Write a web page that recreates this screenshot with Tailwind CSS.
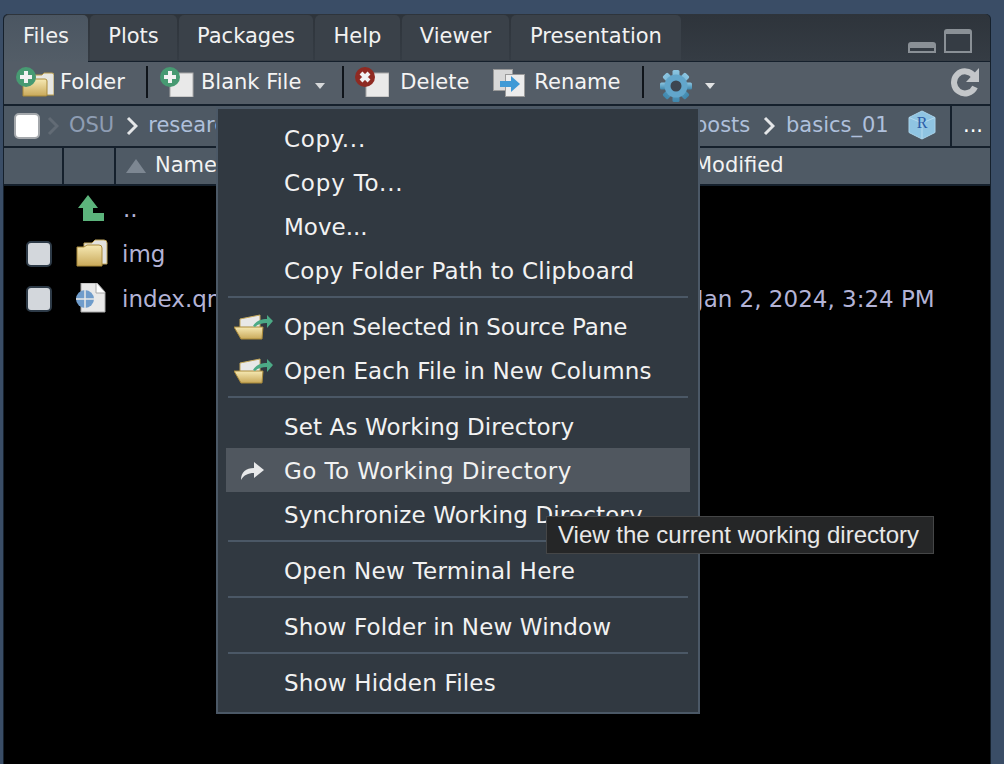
<!DOCTYPE html>
<html lang="en">
<head>
<meta charset="UTF-8">
<script src="https://cdn.jsdelivr.net/npm/@tailwindcss/browser@4"></script>
<title>Files pane</title>
</head>
<body class="w-[1004px] h-[764px] overflow-hidden bg-[#3a4d66] font-['DejaVu_Sans',sans-serif] text-[23px] text-[#f2f2f2] relative">

<svg class="absolute w-0 h-0">
  <defs>
    <linearGradient id="folderFill" x1="0" y1="0" x2="0" y2="1"><stop offset="0" stop-color="#f6e9b4"/><stop offset="1" stop-color="#c9a95a"/></linearGradient>
    <linearGradient id="gearFill" x1="0" y1="0" x2="0" y2="1"><stop offset="0" stop-color="#8cc6e2"/><stop offset="1" stop-color="#3f87ad"/></linearGradient>
  </defs>
</svg>

<div class="ml-[3px] mt-[14px] w-[988px] h-[750px] bg-[#15202c] rounded-t-[5px] flex flex-col pl-px pr-px">
  <!-- tabs -->
  <div class="h-[47px] pt-px flex gap-[2px] bg-gradient-to-b from-[#2e343b] to-[#353c44] rounded-t-[5px] relative text-[21px]">
    <div class="w-[84px] h-[47px] rounded-t-[5px] bg-gradient-to-b from-[#4b5662] to-[#535d67] flex items-center justify-center pb-[3px] z-10">Files</div>
    <div class="w-[87px] h-[45px] rounded-t-[5px] bg-[#3a4149] flex items-center justify-center pb-px">Plots</div>
    <div class="w-[134px] h-[45px] rounded-t-[5px] bg-[#3a4149] flex items-center justify-center pb-px">Packages</div>
    <div class="w-[85px] h-[45px] rounded-t-[5px] bg-[#3a4149] flex items-center justify-center pb-px">Help</div>
    <div class="w-[107px] h-[45px] rounded-t-[5px] bg-[#3a4149] flex items-center justify-center pb-px">Viewer</div>
    <div class="w-[170px] h-[45px] rounded-t-[5px] bg-[#3a4149] flex items-center justify-center pb-px">Presentation</div>
    <div class="ml-auto flex items-end gap-2 pr-[18px] pb-[8px] h-[46px]">
      <svg width="28" height="12" viewBox="0 0 28 12"><path d="M0 12V4a3 3 0 0 1 3-3h22a3 3 0 0 1 3 3v8z" fill="#8a9096"/><rect x="2" y="7" width="24" height="3" fill="#353c44"/></svg>
      <svg width="28" height="24" viewBox="0 0 28 24"><path d="M0 24V3a3 3 0 0 1 3-3h22a3 3 0 0 1 3 3v21z" fill="#8a9096"/><rect x="2" y="5" width="24" height="17" fill="#353c44"/></svg>
    </div>
  </div>

  <!-- toolbar -->
  <div class="h-[42px] mt-px bg-[#545d67] flex items-center text-[21px] text-[#f4f4f4] relative">
    <svg width="38" height="30" viewBox="0 0 38 30" class="ml-[12px] mt-[-2px]"><path d="M19 8h7l2-2h8a2 2 0 0 1 2 2v20H20z" fill="#e7e7e2" stroke="#b89b4b"/><path d="M7 12h22a2 2 0 0 1 2 2v14a1 1 0 0 1-1 1H7z" fill="url(#folderFill)" stroke="#a98a3a"/><circle cx="10" cy="10" r="10" fill="#479a72"/><path d="M10 4v12M4 10h12" stroke="#f2f2f2" stroke-width="4"/></svg>
    <span class="ml-[6px]">Folder</span>
    <div class="ml-[21px] mb-[2px] w-[2px] h-[32px] bg-[#0f141a]"></div>
    <svg width="34" height="30" viewBox="0 0 34 30" class="ml-[12px] mt-[-2px]"><rect x="10" y="6" width="23" height="24" fill="#e9e9e9" stroke="#a8a8a8"/><circle cx="10" cy="10" r="10" fill="#479a72"/><path d="M10 4v12M4 10h12" stroke="#f2f2f2" stroke-width="4"/></svg>
    <span class="ml-[7px]">Blank File</span>
    <svg width="10" height="6" viewBox="0 0 10 6" class="ml-[14px] mt-[5px]"><path d="M0 0h10L5 6z" fill="#d6d8da"/></svg>
    <div class="ml-[17px] mb-[2px] w-[2px] h-[32px] bg-[#0f141a]"></div>
    <svg width="34" height="30" viewBox="0 0 34 30" class="ml-[11px] mt-[-2px]"><rect x="11" y="6" width="23" height="24" fill="#e9e9e9" stroke="#a8a8a8"/><circle cx="10" cy="10" r="10" fill="#8f2a22"/><path d="M6 6l8 8M14 6l-8 8" stroke="#f2f2f2" stroke-width="4"/></svg>
    <span class="ml-[11px]">Delete</span>
    <svg width="32" height="28" viewBox="0 0 32 28" class="ml-[24px]"><rect x="0.500" y="0.500" width="19" height="21" fill="#d8d8d8" stroke="#9a9a9a"/><rect x="12.500" y="5.500" width="19" height="22" fill="#ececec" stroke="#9a9a9a"/><path d="M7 12h11V7l9 8-9 8v-5H7z" fill="#3f9ad6"/></svg>
    <span class="ml-[9px]">Rename</span>
    <div class="ml-[22px] mb-[2px] w-[2px] h-[32px] bg-[#0f141a]"></div>
    <svg width="32" height="32" viewBox="0 0 32 32" class="ml-[16px] mt-[6px]">
      <g fill="url(#gearFill)"><rect x="12.500" y="0" width="7" height="32" rx="1.500"/><rect x="0" y="12.500" width="32" height="7" ry="1.500"/><rect x="12.500" y="0" width="7" height="32" rx="1.500" transform="rotate(45 16 16)"/><rect x="12.500" y="0" width="7" height="32" rx="1.500" transform="rotate(-45 16 16)"/></g>
      <circle cx="16" cy="16" r="11.500" fill="#62a6cb"/><circle cx="16" cy="16" r="5.500" fill="#3d4650"/>
    </svg>
    <svg width="10" height="6" viewBox="0 0 10 6" class="ml-[13px] mt-[6px]"><path d="M0 0h10L5 6z" fill="#e2e3e4"/></svg>
    <svg width="30" height="30" viewBox="0 0 30 30" class="ml-auto mr-[9px] mt-[-2px]"><path d="M24 20a11 11 0 1 1-1-11" fill="none" stroke="#c3c6c9" stroke-width="6"/><path d="M28 1v14H15z" fill="#c3c6c9"/></svg>
  </div>

  <!-- path bar -->
  <div class="h-[40px] mt-[2px] bg-[#4e5964] flex items-center text-[21px] relative">
    <div class="ml-[10px] w-[26px] h-[26px] bg-white rounded-[5px] border-2 border-[#a4a8ac]"></div>
    <svg width="12" height="20" viewBox="0 0 12 20" class="ml-[7px]"><path d="M2 2l8 8-8 8" fill="none" stroke="#626b75" stroke-width="3"/></svg>
    <span class="ml-[10px] text-[#8e9db3]">OSU</span>
    <svg width="12" height="20" viewBox="0 0 12 20" class="ml-[12px]"><path d="M2 2l8 8-8 8" fill="none" stroke="#e4e6e8" stroke-width="3"/></svg>
    <span class="ml-[10px] text-[#afc0dc]">research</span>
    <span class="absolute left-[690px] text-[#afc0dc]">posts</span>
    <svg width="12" height="20" viewBox="0 0 12 20" class="absolute left-[759px] top-[10px]"><path d="M2 2l8 8-8 8" fill="none" stroke="#e4e6e8" stroke-width="3"/></svg>
    <span class="absolute left-[782px] text-[#afc0dc]">basics_01</span>
    <svg width="30" height="30" viewBox="0 0 30 30" class="absolute left-[903px] top-[4px]"><path d="M15 1l13 6.500v15L15 29 2 22.500v-15z" fill="#8fc4e2" stroke="#a9d3ea"/><path d="M2 7.500L15 13l13-5.500M15 13v16" fill="none" stroke="#b4daee"/><text x="15" y="18" text-anchor="middle" font-family="Liberation Serif" font-size="16" fill="#2a5ca8">R</text></svg>
    <div class="absolute left-[946px] top-0 w-[2px] h-[40px] bg-[#15202c]"></div>
    <span class="absolute left-[959px] text-white">...</span>
  </div>

  <!-- table header -->
  <div class="h-[36px] mt-[2px] bg-[#4f5a65] flex items-center text-[21px]">
    <div class="w-[60px] h-full border-r-2 border-[#15202c]"></div>
    <div class="w-[52px] h-full border-r-2 border-[#15202c]"></div>
    <svg width="20" height="14" viewBox="0 0 20 14" class="ml-[10px] mr-[9px]"><path d="M0 14L10 0l10 14z" fill="#7d8792"/></svg>
    <span>Name</span>
    <span class="ml-[477px]">Modified</span>
  </div>

  <!-- file list -->
  <div class="flex-1 mt-[2px] bg-black pr-[3px] text-[#b3b3d6]">
    <div class="h-[46px] flex items-center">
      <svg width="26" height="26" viewBox="0 0 26 26" class="ml-[74px] mb-[2px]"><path d="M10 0l10 13h-5v5h11v8H5V13H0z" fill="#5cb47c"/></svg>
      <span class="ml-[19px]">..</span>
    </div>
    <div class="h-[44px] flex items-center">
      <div class="ml-[22px] w-[26px] h-[26px] rounded-[5px] bg-[#d3d7dc] border-2 border-[#2d3a47]"></div>
      <svg width="32" height="28" viewBox="0 0 32 28" class="ml-[24px] mb-[2px]"><path d="M8 4h8l3-3h9a3 3 0 0 1 3 3v21H8z" fill="#e2e2de" stroke="#c4a85c"/><path d="M1 8h7l3-2h12a3 3 0 0 1 3 3v18H1z" fill="url(#folderFill)" stroke="#a98a3a"/></svg>
      <span class="ml-[14px]">img</span>
    </div>
    <div class="h-[46px] flex items-center">
      <div class="ml-[22px] w-[26px] h-[26px] rounded-[5px] bg-[#d3d7dc] border-2 border-[#2d3a47]"></div>
      <svg width="30" height="30" viewBox="0 0 30 30" class="ml-[24px] mb-[3px]"><path d="M5 0h16l8 9v20H5z" fill="#e9e9e9" stroke="#a8a8a8"/><path d="M20 0v10h9" fill="#fff" stroke="#a8a8a8"/><circle cx="9" cy="16" r="9" fill="#6f9ccb"/><path d="M9 7v18M0 16h18" stroke="#e9e9e9" stroke-width="1.500"/></svg>
      <span class="ml-[16px]">index.qmd</span>
      <span class="ml-[453px]">Jan 2, 2024, 3:24 PM</span>
    </div>
  </div>
</div>

<!-- context menu -->
<div class="absolute left-[216px] top-[107px] w-[484px] h-[607px] bg-[#313941] border-2 border-[#4b5866] pt-2 pl-2">
  <div class="h-[44px] flex items-center pl-[58px] tracking-[0.7px]">Copy...</div>
  <div class="h-[44px] flex items-center pl-[58px] tracking-[0.8px]">Copy To...</div>
  <div class="h-[44px] flex items-center pl-[58px]">Move...</div>
  <div class="h-[44px] flex items-center pl-[58px] tracking-[0.28px]">Copy Folder Path to Clipboard</div>
  <div class="h-[2px] mt-[3px] mb-[7px] ml-[2px] w-[460px] bg-[#4b5866]"></div>
  <div class="h-[44px] flex items-center">
    <svg width="40" height="26" viewBox="0 0 40 26" class="ml-[8px]"><path d="M6 5l20-4v20H6z" fill="#e8e8e8" stroke="#c4a85c"/><path d="M0 13h29l-1 12H7z" fill="url(#folderFill)" stroke="#a98a3a"/><path d="M19 12c3-5 8-7 14-7V1l6 6-6 7V9c-5 0-9 1-12 4z" fill="#4caa86"/></svg>
    <span class="ml-[10px] tracking-[-0.1px]">Open Selected in Source Pane</span>
  </div>
  <div class="h-[44px] flex items-center">
    <svg width="40" height="26" viewBox="0 0 40 26" class="ml-[8px]"><path d="M6 5l20-4v20H6z" fill="#e8e8e8" stroke="#c4a85c"/><path d="M0 13h29l-1 12H7z" fill="url(#folderFill)" stroke="#a98a3a"/><path d="M19 12c3-5 8-7 14-7V1l6 6-6 7V9c-5 0-9 1-12 4z" fill="#4caa86"/></svg>
    <span class="ml-[10px] tracking-[0.14px]">Open Each File in New Columns</span>
  </div>
  <div class="h-[2px] mt-[3px] mb-[7px] ml-[2px] w-[460px] bg-[#4b5866]"></div>
  <div class="h-[44px] flex items-center pl-[58px] tracking-[0.12px]">Set As Working Directory</div>
  <div class="h-[44px] -mt-px mb-px pt-[2px] flex items-center bg-[#50575f] w-[464px]">
    <svg width="24" height="18" viewBox="0 0 24 18" class="ml-[15px]"><path d="M0 18c0-8 5-12 13-12V0l10 8-10 8v-5c-6 0-10 2-13 7z" fill="#e8e9ea"/></svg>
    <span class="ml-[19px] tracking-[0.43px]">Go To Working Directory</span>
  </div>
  <div class="h-[44px] flex items-center pl-[58px] tracking-[0.14px]">Synchronize Working Directory</div>
  <div class="h-[2px] mt-[3px] mb-[7px] ml-[2px] w-[460px] bg-[#4b5866]"></div>
  <div class="h-[44px] flex items-center pl-[58px] tracking-[0.27px]">Open New Terminal Here</div>
  <div class="h-[2px] mt-[3px] mb-[7px] ml-[2px] w-[460px] bg-[#4b5866]"></div>
  <div class="h-[44px] flex items-center pl-[58px] tracking-[0.12px]">Show Folder in New Window</div>
  <div class="h-[2px] mt-[3px] mb-[7px] ml-[2px] w-[460px] bg-[#4b5866]"></div>
  <div class="h-[44px] flex items-center pl-[58px] tracking-[0.18px]">Show Hidden Files</div>
</div>

<!-- tooltip -->
<div class="absolute left-[546px] top-[516px] w-[388px] h-[38px] bg-[#252627] border border-[#454647] flex items-center pl-[11px] font-['Liberation_Sans',sans-serif] text-[24px] text-[#e8e8e8]">View the current working directory</div>

</body>
</html>
